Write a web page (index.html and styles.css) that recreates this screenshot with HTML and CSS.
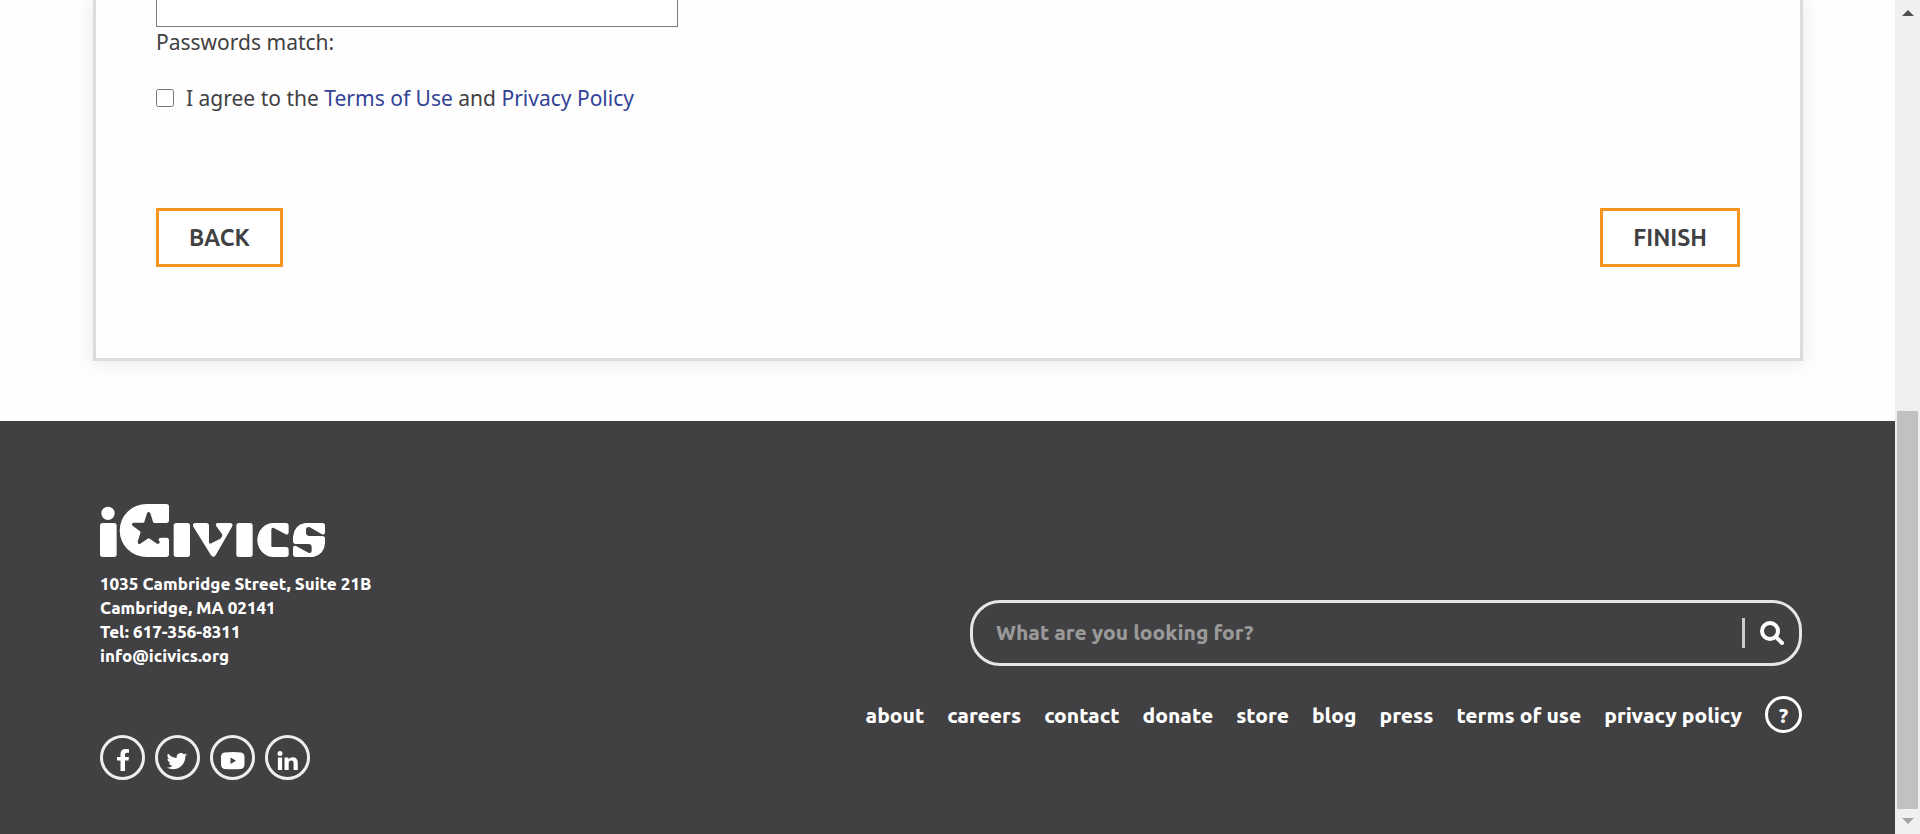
FILE: index.html
```html
<!DOCTYPE html>
<html lang="en">
<head>
<meta charset="utf-8">
<title>iCivics</title>
<link rel="stylesheet" href="styles.css">
</head>
<body>
<div class="page">
  <main class="main">
    <form class="panel">
      <input class="field" type="password" id="confirm" aria-label="Confirm password">
      <label class="match" for="confirm">Passwords match:</label>
      <div class="agree">
        <input class="agree-box" type="checkbox" id="agree">
        <label for="agree">I agree to the <a href="#">Terms of Use</a> and <a href="#">Privacy Policy</a></label>
      </div>
      <div class="actions">
        <button class="action" type="button">BACK</button>
        <button class="action" type="submit">FINISH</button>
      </div>
    </form>
  </main>
  <footer class="footer">
    <div class="about">
      <svg class="logo" viewBox="60 42 675 159" role="img" aria-label="iCivics">
        <circle cx="84" cy="70" r="20"/>
        <rect x="60" y="99" width="50" height="102" rx="8"/>
        <path d="M200 42H259Q267 42 267 50V91Q267 99 259 99H224Q220 99 219 95L211 70Q206 62 201 70L193 96Q192 98 189 98H160Q153 101 158 107L180 124Q182 126 181 129L173 155Q173 164 181 161L203 146Q206 144 209 146L231 161Q240 163 239 155L236 150Q236 143 244 143H259Q267 143 267 151V193Q267 201 259 201H200A81 79.500 0 0 1 200 42Z"/>
        <rect x="281" y="99" width="49" height="102" rx="8"/>
        <path d="M346 99H379Q387 99 387 107V157Q388 163 394 160L421 146Q429 139 426 132L408 107Q406 99 413 99H450Q461 100 456 110L407 196Q400 205 393 196L340 110Q336 100 346 99Z"/>
        <rect x="469" y="99" width="49" height="102" rx="8"/>
        <path d="M580 99H618Q626 99 626 107V128Q624 136 617 133L580 113Q574 112 574 120V168Q574 171 577 171H618Q626 171 626 179V193Q626 201 618 201H580A48 51 0 0 1 580 99Z"/>
        <path d="M675 99H727Q735 99 735 107V128Q733 136 726 133L688 111Q678 110 678 120V130Q678 137 686 138H727Q735 138 735 146V160Q733 194 700 201H647Q639 201 639 193V173Q641 165 648 168L685 188Q695 191 695 182V170Q695 163 687 162H647Q639 162 639 154V140Q642 105 675 99Z"/>
      </svg>
      <address class="address">1035 Cambridge Street, Suite 21B<br>Cambridge, MA 02141<br>Tel: 617-356-8311<br>info@icivics.org</address>
      <div class="social">
        <a class="round" href="#" aria-label="Facebook"><svg viewBox="0 0 39 39"><path d="M26 11.200V14.700H23.900Q22 14.700 22 16.500V19H26L25.500 22.500H22V33H17.500V22.500H14V19H17.500V16Q17.500 11 22.800 11Z"/></svg></a>
        <a class="round" href="#" aria-label="Twitter"><svg viewBox="0 0 39 39"><path d="M29.500 16a9 9 0 0 1-2.200 2.200C27.600 25 22.500 31.200 15 31.200a12 12 0 0 1-6.200-1.700c2.300.2 4.300-.4 6-1.700-1.900 0-3.300-1.200-3.900-2.900h1.800c-2-.5-3.300-2.200-3.300-4.100l1.900.5c-1.900-1.500-2.300-3.700-1.300-5.700a12 12 0 0 0 8.700 4.500c-.6-3 1.400-5.200 4.100-5.200 1.200 0 2.300.5 3 1.300l2.700-1-1.800 2.300Z"/></svg></a>
        <a class="round" href="#" aria-label="YouTube"><svg viewBox="0 0 39 39"><path fill-rule="evenodd" d="M11.500 14.500Q20 13.500 28 14.500Q31.500 15 31.500 19V26Q31.500 30.500 28 31Q20 31.500 11.500 31Q8 30.500 8 26V19Q8 15 11.500 14.500ZM17.500 19.500V26L23 22.750Z"/></svg></a>
        <a class="round" href="#" aria-label="LinkedIn"><svg viewBox="0 0 39 39"><circle cx="12" cy="15.500" r="2.500"/><path d="M9.900 19.500H14.100V32H9.900ZM16.500 19.500H20.500V21.200Q22 19.200 24.700 19.200Q29.800 19.200 29.800 25V32H25.600V25.500Q25.600 22.600 23.300 22.600Q20.700 22.600 20.700 25.700V32H16.500Z"/></svg></a>
      </div>
    </div>
    <div class="links">
      <form class="search" role="search">
        <input class="search-input" type="search" placeholder="What are you looking for?" aria-label="Search">
        <button class="search-go" type="button" aria-label="Search"><svg viewBox="0 0 24 24"><circle cx="10" cy="10" r="8"/><path d="M16 16L22 22"/></svg></button>
      </form>
      <nav class="nav">
        <a href="#">about</a><a href="#">careers</a><a href="#">contact</a><a href="#">donate</a><a href="#">store</a><a href="#">blog</a><a href="#">press</a><a href="#">terms of use</a><a href="#">privacy policy</a><a class="help" href="#">?</a>
      </nav>
    </div>
  </footer>
</div>
<div class="scrollbar" aria-hidden="true">
  <svg class="arrow" viewBox="0 0 12 6"><path d="M0 6L6 0L12 6Z"/></svg>
  <div class="thumb"></div>
  <svg class="arrow arrow-end" viewBox="0 0 12 6"><path d="M0 0H12L6 6Z"/></svg>
</div>
</body>
</html>
```
FILE: styles.css
```css
* { box-sizing: border-box; }
body {
  margin: 0;
  min-height: 100vh;
  display: grid;
  grid-template-columns: 1fr 25px;
  background: #fefefe;
  color: #414042;
  font-family: "Noto Sans", sans-serif;
  font-size: 21px;
  line-height: 30px;
}
a { color: #324395; text-decoration: none; }
.page { display: flex; flex-direction: column; }
.main { padding: 0 92px 60px 93px; }
.panel {
  padding: 0 60px 91px;
  border: 3px solid #dcdcdc;
  border-top: 0;
  box-shadow: 0 0 20px rgba(0, 0, 0, .1);
}
.field {
  display: block;
  width: 522px;
  height: 27px;
  border: 1px solid #7b7b7b;
  border-top: 0;
  background: #fff;
}
.match { display: block; }
.agree { display: flex; align-items: center; gap: 12px; margin-top: 26px; }
.agree-box { width: 18px; height: 18px; margin: 0; }
.actions { display: flex; justify-content: space-between; margin-top: 95px; }
.action {
  height: 59px;
  padding: 0 30px;
  border: 3px solid #f7941e;
  background: #fff;
  color: #414042;
  font: 700 23px "Ubuntu", "Noto Sans", sans-serif;
}
.footer {
  flex: 1;
  display: flex;
  justify-content: space-between;
  padding: 83px 93px 54px 100px;
  background: #414042;
  color: #fff;
  font-family: "Ubuntu", "Noto Sans", sans-serif;
  font-weight: 800;
}
.footer a { color: #fff; }
.logo { display: block; width: 225px; height: 53px; fill: #fff; }
.address { margin-top: 15px; font-size: 17px; line-height: 24px; font-style: normal; }
.social { display: flex; gap: 10px; margin-top: 67px; }
.round { width: 45px; height: 45px; border: 3px solid #eee; border-radius: 50%; }
.round svg { display: block; fill: #fff; }
.links { display: flex; flex-direction: column; align-items: flex-end; gap: 30px; padding-top: 96px; }
.search {
  display: flex;
  align-items: center;
  width: 832px;
  height: 66px;
  padding-right: 15px;
  border: 3px solid #e6e6e6;
  border-radius: 30px;
}
.search-input {
  flex: 1;
  height: 100%;
  padding: 0 23px 2px;
  border: 0;
  background: none;
  color: #fff;
  font: inherit;
  font-size: 21px;
}
.search-input::placeholder { color: #999; opacity: 1; }
.search-go {
  height: 30px;
  padding: 0 0 0 15px;
  border: 0;
  border-left: 3px solid #ccc;
  background: none;
}
.search-go svg { display: block; width: 24px; height: 24px; fill: none; stroke: #fff; stroke-width: 4; stroke-linecap: round; }
.nav { display: flex; align-items: center; gap: 23px; font-size: 21px; }
.nav .help {
  display: flex;
  align-items: center;
  justify-content: center;
  width: 37px;
  height: 37px;
  border: 3px solid #fff;
  border-radius: 50%;
}
.scrollbar { display: flex; flex-direction: column; align-items: center; padding: 10px 0; background: #f0f0f0; }
.arrow { width: 12px; height: 6px; fill: #505050; }
.arrow-end { margin-top: 9px; fill: #a3a3a3; }
.thumb { width: 21px; height: 398px; margin-top: auto; background: #c1c1c1; }
```
